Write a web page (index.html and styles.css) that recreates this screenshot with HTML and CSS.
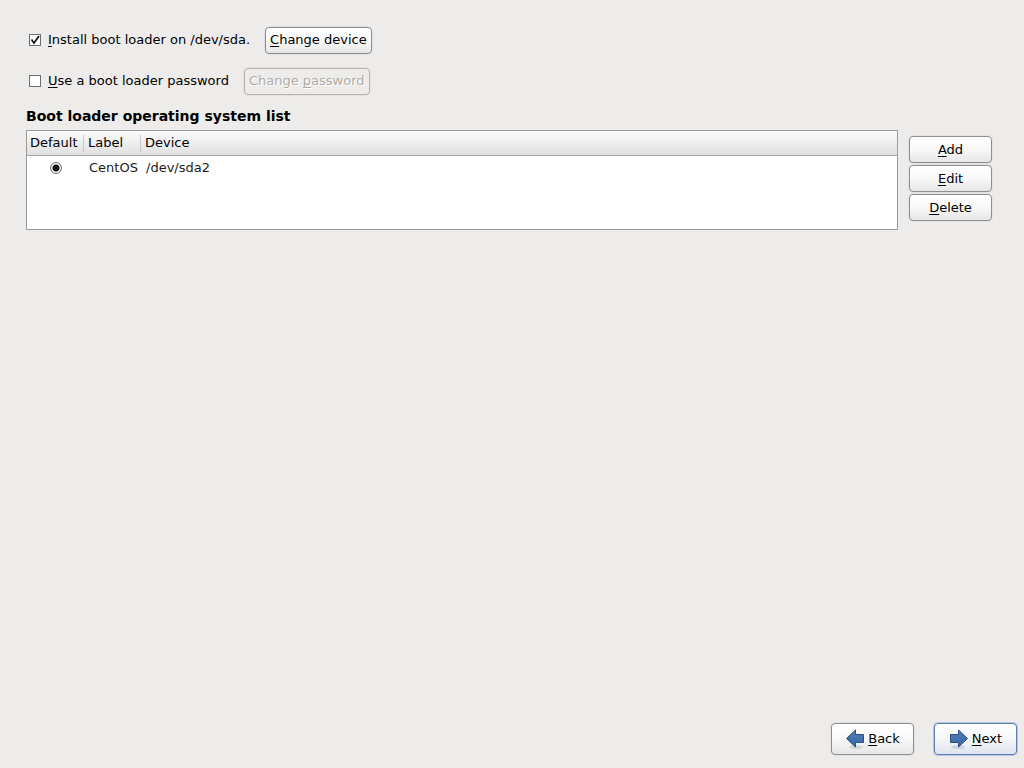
FILE: index.html
```html
<!DOCTYPE html>
<html lang="en">
<head>
    <meta charset="utf-8">
    <title>Boot loader</title>
    <link rel="stylesheet" href="styles.css">
</head>
<body>
    <main>
        <div class="option">
            <input type="checkbox" id="install" checked>
            <label for="install"><u>I</u>nstall boot loader on /dev/sda.</label>
            <button type="button"><u>C</u>hange device</button>
        </div>
        <div class="option">
            <input type="checkbox" id="use_password">
            <label for="use_password"><u>U</u>se a boot loader password</label>
            <button type="button" disabled>Change <u>p</u>assword</button>
        </div>

        <h1>Boot loader operating system list</h1>
        <div class="os-list">
            <div class="table-box">
                <table>
                    <thead>
                        <tr>
                            <th class="col-default">Default</th>
                            <th class="col-label">Label</th>
                            <th>Device</th>
                        </tr>
                    </thead>
                    <tbody>
                        <tr>
                            <td class="center"><input type="radio" name="default_os" aria-label="CentOS" checked></td>
                            <td>CentOS</td>
                            <td>/dev/sda2</td>
                        </tr>
                    </tbody>
                </table>
            </div>
            <div class="actions">
                <button type="button"><u>A</u>dd</button>
                <button type="button"><u>E</u>dit</button>
                <button type="button"><u>D</u>elete</button>
            </div>
        </div>
    </main>

    <footer>
        <button type="button" class="nav">
            <svg class="arrow" viewBox="0 0 20 20" aria-hidden="true">
                <defs>
                    <linearGradient id="blue" x1="0" y1="0" x2="0" y2="1">
                        <stop offset="0" stop-color="#5580b5"/>
                        <stop offset="1" stop-color="#3465a4"/>
                    </linearGradient>
                </defs>
                <ellipse cx="11" cy="18" rx="7" ry="2" fill="#000" opacity="0.1"/>
                <path d="M1.5 9.5L10.5 1V5.5H18.5V13.5H10.5V18Z" fill="url(#blue)" stroke="#2a4f80" stroke-linejoin="round"/>
            </svg>
            <span><u>B</u>ack</span>
        </button>
        <button type="button" class="nav primary">
            <svg class="arrow" viewBox="0 0 20 20" aria-hidden="true">
                <ellipse cx="9" cy="18" rx="7" ry="2" fill="#000" opacity="0.1"/>
                <path d="M18.5 9.5L9.5 1V5.5H1.5V13.5H9.5V18Z" fill="url(#blue)" stroke="#2a4f80" stroke-linejoin="round"/>
            </svg>
            <span><u>N</u>ext</span>
        </button>
    </footer>
</body>
</html>
```
FILE: styles.css
```css
* {
    box-sizing: border-box;
}

body {
    display: flex;
    flex-direction: column;
    min-height: 100vh;
    margin: 0;
    background-color: #edeceb;
    color: #000;
    font-family: "DejaVu Sans", sans-serif;
    font-size: 13px;
    line-height: 18px;
}

main {
    flex: 1;
    padding: 26px 32px 0 26px;
}

u {
    text-decoration-skip-ink: none;
    text-underline-offset: 2px;
}

.option {
    display: flex;
    align-items: center;
    height: 28px;
    margin-bottom: 13px;
    padding-left: 3px;
}

.option label {
    margin: 0 15px 0 7px;
}

input {
    appearance: none;
    display: block;
    width: 12px;
    height: 12px;
    margin: 0;
    border: 1px solid #6f6f6e;
    background: #fff center / 10px 10px no-repeat;
}

input[type="checkbox"]:checked {
    background-image: url("data:image/svg+xml,%3Csvg xmlns='http://www.w3.org/2000/svg' viewBox='0 0 10 10'%3E%3Cpath d='M1.5 4.5L4 8L9 1' fill='none' stroke='%23111' stroke-width='1.7'/%3E%3C/svg%3E");
}

input[type="radio"] {
    border-radius: 50%;
    margin: 0 auto;
}

input[type="radio"]:checked {
    background-image: radial-gradient(circle, #111 3px, transparent 4px);
}

button {
    height: 27px;
    padding: 0 4px;
    border: 1px solid #8f8e8d;
    border-radius: 4px;
    background: linear-gradient(#fff, #f8f8f8 50%, #e6e6e6);
    box-shadow: 0 0 0 1px rgba(0, 0, 0, 0.04);
    color: #000;
    font: inherit;
}

button:disabled {
    border-color: #b5b4b1;
    background: #edecea;
    color: #aeada8;
    text-shadow: 1px 1px 0 #fff;
}

h1 {
    margin: -1px 0 5px;
    font-size: 14px;
    line-height: 18px;
}

.os-list {
    display: flex;
    gap: 11px;
}

.table-box {
    flex: 1;
    height: 100px;
    border: 1px solid #9c9b9a;
    background-color: #fff;
}

table {
    width: 100%;
    border-collapse: separate;
    border-spacing: 0;
    table-layout: fixed;
}

th {
    height: 25px;
    padding: 0 3px;
    border-bottom: 1px solid #a8a7a6;
    background: linear-gradient(#fbfbfb, #eee 50%, #dfdfdf);
    font-weight: normal;
    text-align: left;
}

th + th {
    padding-left: 5px;
    background: linear-gradient(#c8c8c8, #c8c8c8) left center / 1px 17px no-repeat, linear-gradient(#fbfbfb, #eee 50%, #dfdfdf);
}

.col-default {
    width: 56px;
}

.col-label {
    width: 57px;
}

td {
    height: 24px;
    padding: 0 0 0 6px;
    color: #1c1c1c;
}

td.center {
    padding: 0 0 0 2px;
}

.actions {
    display: flex;
    flex-direction: column;
    gap: 2px;
    width: 83px;
    padding-top: 6px;
}

footer {
    display: flex;
    justify-content: flex-end;
    gap: 20px;
    padding: 0 7px 13px;
}

.nav {
    display: flex;
    align-items: center;
    justify-content: center;
    gap: 3px;
    width: 83px;
    height: 32px;
}

.primary {
    border-color: #5b7fb0;
    background: linear-gradient(#fff, #f4f6f9 50%, #dfe5ee);
    box-shadow: 0 0 0 1px #b4c6de;
}

.arrow {
    width: 20px;
    height: 20px;
}
```
